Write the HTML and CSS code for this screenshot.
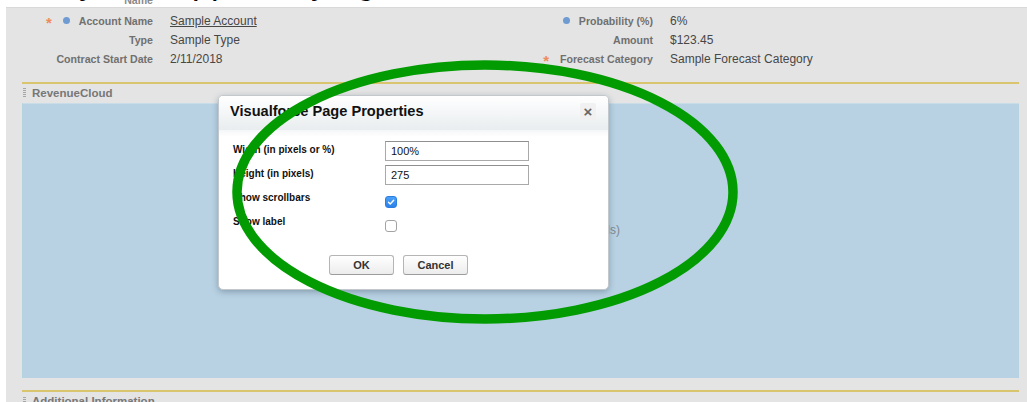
FILE: index.html
```html
<!DOCTYPE html>
<html lang="en">
<head>
<meta charset="utf-8">
<title>Page Layout – Visualforce Page Properties</title>
<link rel="stylesheet" href="styles.css">
</head>
<body>
  <div class="caption">
    <span class="caption-name">Name</span>
    <span class="caption-text">Finally, it is applied by right</span>
  </div>

  <main class="layout">
    <div class="fields">
      <div class="label"><span class="req">*</span><span class="dot"></span>Account Name</div>
      <div class="value"><a class="link" href="#">Sample Account</a></div>
      <div class="label"><span class="dot"></span>Probability (%)</div>
      <div class="value">6%</div>

      <div class="label">Type</div>
      <div class="value">Sample Type</div>
      <div class="label">Amount</div>
      <div class="value">$123.45</div>

      <div class="label">Contract Start Date</div>
      <div class="value">2/11/2018</div>
      <div class="label"><span class="req">*</span>Forecast Category</div>
      <div class="value">Sample Forecast Category</div>
    </div>

    <section class="section">
      <div class="section-head"><span class="grip"></span>RevenueCloud</div>
      <div class="vf-frame">
        <div class="vf-note">RevenueCloud (Visualforce Page, 100% x 275 pixels)</div>
      </div>
    </section>

    <section class="section">
      <div class="section-head"><span class="grip"></span>Additional Information</div>
    </section>
  </main>

  <div class="dialog">
    <div class="dialog-head">
      <h2 class="dialog-title">Visualforce Page Properties</h2>
      <span class="dialog-close">&times;</span>
    </div>
    <div class="dialog-body">
      <div class="props">
        <div class="prop-label">Width (in pixels or %)</div>
        <div class="prop-field"><span class="text-input">100%</span></div>

        <div class="prop-label">Height (in pixels)</div>
        <div class="prop-field"><span class="text-input">275</span></div>

        <div class="prop-label">Show scrollbars</div>
        <div class="prop-field"><span class="check is-checked"><svg viewBox="0 0 12 12" width="12" height="12"><path d="M3 6.3 L5.1 8.4 L9.2 3.8" fill="none" stroke="#fff" stroke-width="1.7" stroke-linecap="round" stroke-linejoin="round"/></svg></span></div>

        <div class="prop-label">Show label</div>
        <div class="prop-field"><span class="check"></span></div>
      </div>
      <div class="dialog-actions">
        <button class="btn" type="button">OK</button>
        <button class="btn" type="button">Cancel</button>
      </div>
    </div>
  </div>

  <svg class="markup" width="1027" height="402" viewBox="0 0 1027 402">
    <ellipse cx="485" cy="192" rx="248" ry="127" fill="none" stroke="#029c02" stroke-width="9.5"/>
  </svg>
</body>
</html>
```

FILE: styles.css
```css
* {
  box-sizing: border-box;
}

html,
body {
  margin: 0;
  padding: 0;
}

body {
  position: relative;
  width: 1027px;
  height: 402px;
  overflow: hidden;
  background: #ffffff;
  font-family: "Liberation Sans", Arial, sans-serif;
  color: #333333;
}

/* slide caption strip above the screenshot */
.caption {
  position: relative;
  height: 7px;
  overflow: hidden;
  background: #ffffff;
}

.caption-name {
  display: block;
  width: 153px;
  margin-top: -6px;
  text-align: right;
  font-size: 10.6px;
  font-weight: bold;
  line-height: 12px;
  color: #8a8a8a;
}

.caption-text {
  position: absolute;
  left: -2px;
  top: -38px;
  font-size: 34px;
  line-height: 40px;
  white-space: nowrap;
  color: #000000;
}

/* gray page-layout canvas */
.layout {
  height: 395px;
  margin-left: 6px;
  border-top: 1px solid #d9d9d9;
  background: #e4e4e4;
  padding-top: 3.5px;
}

.fields {
  display: grid;
  grid-template-columns: 147px 319px 147px 1fr;
  grid-auto-rows: 19.25px;
  column-gap: 17px;
  align-items: baseline;
  line-height: 19px;
}

.label {
  text-align: right;
  font-size: 10.6px;
  font-weight: bold;
  color: #707070;
  white-space: nowrap;
}

.value {
  font-size: 12px;
  color: #474747;
  white-space: nowrap;
}

.link {
  color: #474747;
  text-decoration: underline;
}

.req {
  display: inline-block;
  margin-right: 11px;
  font-size: 15px;
  font-weight: bold;
  color: #ee8b5b;
  vertical-align: -3px;
  line-height: 10px;
}

.dot {
  display: inline-block;
  width: 7px;
  height: 7px;
  margin-right: 9px;
  border-radius: 50%;
  background: #6e9bd2;
  vertical-align: 1px;
}

.section {
  margin: 12.5px 8px 0 16px;
}

.section-head {
  display: flex;
  align-items: center;
  height: 21px;
  border-top: 2px solid #dac56f;
  font-size: 11.5px;
  font-weight: bold;
  line-height: 19px;
  color: #777777;
}

.grip {
  width: 3px;
  height: 10px;
  margin: 0 6px 0 1px;
  background: repeating-linear-gradient(to bottom, #a6a6a6 0 1px, transparent 1px 2px);
}

.vf-frame {
  height: 275px;
  border-top: 1px solid #c9dde9;
  border-left: 1px solid #b2d4de;
  background: #b8d2e3;
  padding-top: 119px;
}

.vf-note {
  width: 597px;
  text-align: right;
  font-size: 12px;
  color: #7d8a93;
}

/* properties dialog */
.dialog {
  position: absolute;
  left: 218px;
  top: 95px;
  width: 391px;
  height: 195px;
  border: 1px solid #c2c8cc;
  border-radius: 5px;
  background: #ffffff;
  box-shadow: 0 2px 6px rgba(40, 60, 80, 0.35);
  overflow: hidden;
}

.dialog-head {
  display: flex;
  align-items: flex-start;
  justify-content: space-between;
  height: 34px;
  padding: 7px 12px 0 11px;
  background: linear-gradient(to bottom, #ffffff 0%, #f3f5f6 55%, #e9edef 100%);
}

.dialog-title {
  margin: 0;
  font-size: 14.6px;
  font-weight: bold;
  line-height: 17px;
  color: #111111;
}

.dialog-close {
  display: flex;
  align-items: center;
  justify-content: center;
  width: 16px;
  height: 17px;
  border-radius: 2px;
  background: #f1f1f1;
  font-size: 15px;
  font-weight: bold;
  line-height: 1;
  color: #666666;
}

.dialog-body {
  padding: 11px 0 0 14px;
  background: linear-gradient(to bottom, #f5f6f7 0, #ffffff 7px);
}

.props {
  display: grid;
  grid-template-columns: 152px 144px;
  grid-auto-rows: 20px;
  row-gap: 4px;
}

.prop-label {
  padding-top: 3px;
  font-size: 10px;
  font-weight: bold;
  line-height: 12px;
  color: #111111;
  white-space: nowrap;
}

.prop-field {
  display: flex;
  align-items: flex-start;
}

.text-input {
  display: block;
  width: 144px;
  height: 20px;
  padding: 0 5px;
  border: 1px solid #a9a9a9;
  border-top-color: #8f8f8f;
  font-size: 11px;
  line-height: 18px;
  color: #111111;
  background: #ffffff;
}

.check {
  display: flex;
  align-items: center;
  justify-content: center;
  width: 12px;
  height: 12px;
  margin-top: 7px;
  border: 1px solid #a3a3a3;
  border-radius: 3px;
  background: #ffffff;
}

.check.is-checked {
  border-color: #2b7de0;
  background: linear-gradient(to bottom, #4aa0f7, #2a82ea);
}

.dialog-actions {
  display: flex;
  gap: 9px;
  margin-top: 22px;
  padding-left: 96px;
}

.btn {
  width: 65px;
  height: 20px;
  padding: 0;
  border: 1px solid #b5b5b5;
  border-bottom-color: #9c9c9c;
  border-radius: 3px;
  background: linear-gradient(to bottom, #ffffff, #ececec);
  font-family: "Liberation Sans", Arial, sans-serif;
  font-size: 11px;
  font-weight: bold;
  color: #333333;
}

/* green hand-drawn highlight on top of everything */
.markup {
  position: absolute;
  left: 0;
  top: 0;
  pointer-events: none;
}
```
